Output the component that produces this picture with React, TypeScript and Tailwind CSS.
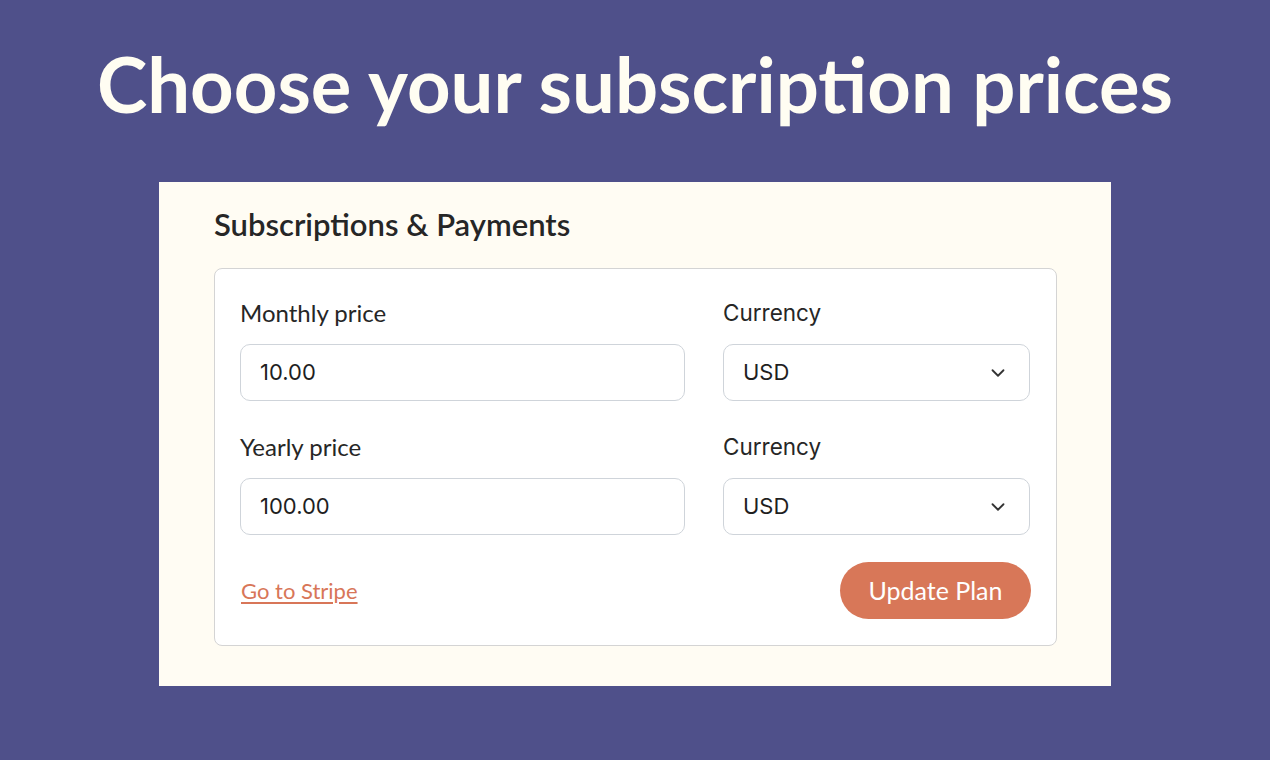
import { ChevronDown } from 'lucide-react';

const rounded = { fontFamily: 'Lato, "Noto Sans", sans-serif' };
const system = { fontFamily: 'Inter, "Noto Sans", sans-serif' };

function Field({ label, value }: { label: string; value: string }) {
  return (
    <div className="flex flex-col">
      <label className="mb-[16px] text-[24px] leading-[30px] text-[#262626]" style={rounded}>
        {label}
      </label>
      <div
        className="flex h-[57px] items-center rounded-[10px] border border-[#cfd4da] bg-white px-[19px] text-[22px] text-[#1f1f1f]"
        style={system}
      >
        {value}
      </div>
    </div>
  );
}

function CurrencySelect({ label }: { label: string }) {
  return (
    <div className="flex flex-col">
      <label className="mb-[16px] text-[22.5px] leading-[30px] text-[#262626]" style={system}>
        {label}
      </label>
      <div
        className="flex h-[57px] items-center justify-between rounded-[10px] border border-[#cfd4da] bg-white pl-[19px] pr-[20px] text-[22px] text-[#1f1f1f]"
        style={system}
      >
        <span>USD</span>
        <ChevronDown className="h-[22px] w-[22px] text-[#333]" strokeWidth={2} />
      </div>
    </div>
  );
}

export default function App() {
  return (
    <div className="flex min-h-[760px] w-full flex-col items-center bg-[#4f508a]">
      <h1
        className="mt-[38px] text-[76px] font-bold leading-[92px] text-[#fffdf2]"
        style={rounded}
      >
        Choose your subscription prices
      </h1>
      <div className="mt-[52px] w-[952px] bg-[#fffcf3] pb-[40px] pl-[55px] pr-[54px] pt-[24px]">
        <h2 className="text-[31px] font-semibold leading-[36px] text-[#262626]" style={rounded}>
          Subscriptions &amp; Payments
        </h2>
        <div className="mt-[26px] rounded-[8px] border border-[#d4d4d4] bg-white px-[25px] pb-[26px] pt-[29px]">
          <div className="grid grid-cols-[445px_307px] gap-x-[38px] gap-y-[31px]">
            <Field label="Monthly price" value="10.00" />
            <CurrencySelect label="Currency" />
            <Field label="Yearly price" value="100.00" />
            <CurrencySelect label="Currency" />
          </div>
          <div className="mt-[27px] flex items-center justify-between">
            <a
              href="#"
              className="ml-[1px] text-[22px] text-[#d87658] underline underline-offset-[3px]"
              style={rounded}
            >
              Go to Stripe
            </a>
            <button
              className="h-[57px] w-[191px] rounded-full bg-[#d87758] text-[25px] font-normal text-white"
              style={rounded}
            >
              Update Plan
            </button>
          </div>
        </div>
      </div>
    </div>
  );
}
